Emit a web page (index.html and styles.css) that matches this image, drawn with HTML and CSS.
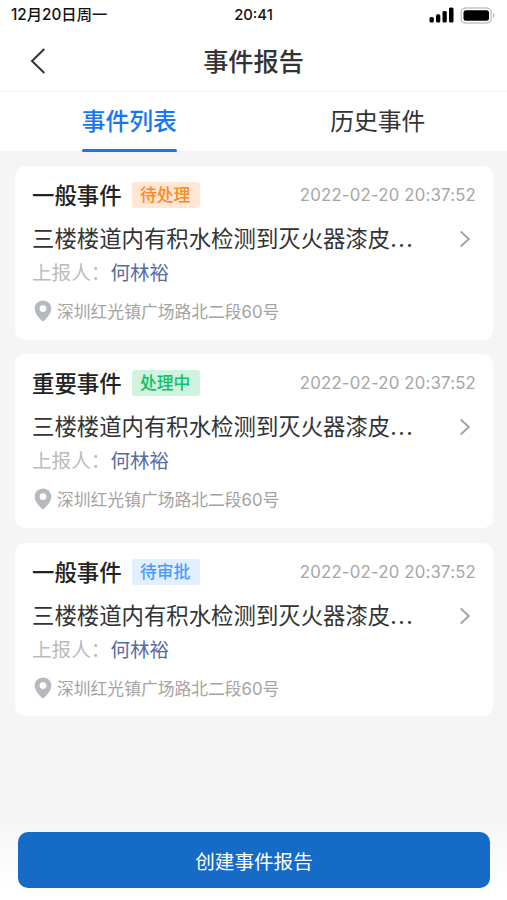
FILE: index.html
```html
<!DOCTYPE html>
<html lang="zh-CN">
<head>
<meta charset="UTF-8">
<meta name="viewport" content="width=device-width, initial-scale=1">
<title>事件报告</title>
<link rel="stylesheet" href="styles.css">
</head>
<body>
<svg class="symbols" aria-hidden="true">
  <symbol id="pin" viewBox="0 0 18 22"><path fill-rule="evenodd" d="M9 .5C4.300.500.700 4.100.700 8.600c0 4.500 3.500 8.600 6.900 12 .8.800 2 .8 2.800 0 3.400-3.400 6.900-7.500 6.900-12C17.300 4.100 13.700.5 9 .5ZM9 5.200a3.400 3.400 0 1 1 0 6.800 3.400 3.400 0 0 1 0-6.800Z" fill="#b6b9be"/></symbol>
  <symbol id="chevron" viewBox="0 0 12 18"><path d="M1.700 1.500 9.800 9l-8.100 7.500" fill="none" stroke="#a3a3a3" stroke-width="1.900"/></symbol>
</svg>
<div class="page">
  <header class="status">
    <span>12月20日周一</span>
    <span class="clock">20:41</span>
    <span class="indicators">
      <svg width="26" height="16" viewBox="0 0 26 16"><rect x="0.500" y="10" width="4.300" height="5.500" rx="1.500"/><rect x="7" y="7.200" width="4.300" height="8.300" rx="1.500"/><rect x="13.500" y="4" width="4.300" height="11.500" rx="1.500"/><rect x="20" y="0.500" width="4.500" height="15" rx="1.500"/></svg>
      <svg width="36" height="17" viewBox="0 0 36 17"><rect x="1.200" y="1" width="30" height="15" rx="4.500" fill="#fff" stroke="#c5c5c5" stroke-width="1.500"/><rect x="3.500" y="3.200" width="25.500" height="10.600" rx="2.500"/><path d="M33 6c2 1 2 4 0 5Z" fill="#bbb"/></svg>
    </span>
  </header>
  <nav class="navbar">
    <svg class="back" width="16" height="28" viewBox="0 0 16 28"><path d="M14.300 2 2 14l12.300 12" fill="none" stroke="#333" stroke-width="2"/></svg>
    <h1>事件报告</h1>
  </nav>
  <div class="tabs">
    <div class="tab active"><span>事件列表</span></div>
    <div class="tab"><span>历史事件</span></div>
  </div>
  <main class="list">
    <article class="card">
      <div class="head"><h2>一般事件</h2><span class="badge pending">待处理</span><time>2022-02-20 20:37:52</time></div>
      <div class="desc"><p>三楼楼道内有积水检测到灭火器漆皮<span class="dots">...</span></p><svg class="chevron"><use href="#chevron"/></svg></div>
      <div class="reporter"><span>上报人：</span><b>何林裕</b></div>
      <div class="address"><svg class="pin"><use href="#pin"/></svg><span>深圳红光镇广场路北二段60号</span></div>
    </article>
    <article class="card">
      <div class="head"><h2>重要事件</h2><span class="badge processing">处理中</span><time>2022-02-20 20:37:52</time></div>
      <div class="desc"><p>三楼楼道内有积水检测到灭火器漆皮<span class="dots">...</span></p><svg class="chevron"><use href="#chevron"/></svg></div>
      <div class="reporter"><span>上报人：</span><b>何林裕</b></div>
      <div class="address"><svg class="pin"><use href="#pin"/></svg><span>深圳红光镇广场路北二段60号</span></div>
    </article>
    <article class="card">
      <div class="head"><h2>一般事件</h2><span class="badge review">待审批</span><time>2022-02-20 20:37:52</time></div>
      <div class="desc"><p>三楼楼道内有积水检测到灭火器漆皮<span class="dots">...</span></p><svg class="chevron"><use href="#chevron"/></svg></div>
      <div class="reporter"><span>上报人：</span><b>何林裕</b></div>
      <div class="address"><svg class="pin"><use href="#pin"/></svg><span>深圳红光镇广场路北二段60号</span></div>
    </article>
  </main>
  <footer class="footer"><button>创建事件报告</button></footer>
</div>
</body>
</html>
```

FILE: styles.css
```css
* { box-sizing: border-box; margin: 0; padding: 0; }
body { font-family: Inter, "Noto Sans CJK SC", sans-serif; color: #333; background: #f5f5f5; }
svg { display: block; flex: none; }
.symbols { width: 0; height: 0; position: absolute; }
.page { height: 900px; display: flex; flex-direction: column; overflow: hidden; }
.status { height: 30px; background: #fff; display: grid; grid-template-columns: 1fr auto 1fr; align-items: center; padding: 0 11px; font-size: 15.3px; line-height: 30px; font-weight: 500; color: #111; white-space: nowrap; }
.clock { font-size: 14.8px; }
.indicators { display: flex; justify-content: flex-end; align-items: center; gap: 5px; }
.navbar { height: 62px; background: #fff; border-bottom: 1.5px solid #f4f4f4; display: grid; grid-template-columns: 60px 1fr 60px; align-items: center; }
.back { margin-left: 30px; }
h1 { font-size: 25.2px; line-height: 60px; padding-top: 2px; font-weight: 500; text-align: center; }
.tabs { height: 59px; flex: none; background: #fff; display: flex; padding: 0 5px; }
.tab { flex: 1; display: flex; justify-content: center; font-size: 23.8px; }
.tab span { height: 59px; line-height: 60px; }
.active { color: #1677f2; }
.active span { position: relative; font-weight: 500; }
.active span::after { content: ""; position: absolute; left: 0; right: 0; bottom: -0.500px; height: 3px; border-radius: 2px; background: #1677f2; }
.list { flex: 1; padding: 15px 14px 0 15px; display: flex; flex-direction: column; gap: 14.5px; }
.card { height: 173.8px; background: #fff; border-radius: 10px; padding: 14px 17px 0; }
.head { display: flex; align-items: center; height: 30px; }
h2 { font-size: 22.4px; line-height: 30px; padding-top: 2px; font-weight: 500; color: #222; }
.badge { margin-left: 10px; width: 68px; height: 26px; line-height: 27px; padding-right: 1px; border-radius: 3px; text-align: center; font-size: 16.8px; font-weight: 500; }
.pending { color: #ff871f; background: #ffe7d3; }
.processing { color: #0fc160; background: #cff3df; }
.review { color: #4b9bff; background: #e1efff; }
time { margin-left: auto; font-size: 16.8px; letter-spacing: 0.18px; color: #a6a6a6; white-space: nowrap; }
.desc { display: flex; justify-content: space-between; align-items: center; height: 58px; margin-right: 5px; font-size: 22.4px; line-height: 58px; white-space: nowrap; }
.dots { letter-spacing: 1.6px; }
.chevron { width: 12px; height: 18px; }
.reporter { margin-top: -10px; height: 30px; line-height: 30px; font-size: 19.6px; color: #bbb; display: flex; }
.reporter b { font-weight: 400; color: #576b9f; }
.address { display: flex; align-items: center; height: 30px; margin-top: 8px; font-size: 16.8px; line-height: 30px; color: #a3a3a3; }
.address span { padding-top: 2px; }
.pin { width: 18px; height: 22px; margin: 0 5px 0 2px; }
.footer { height: 84px; flex: none; padding: 16px 17px 0 18px; background: linear-gradient(#f5f5f5, #fff 85%); }
button { display: block; width: 100%; height: 56px; border: 0; border-radius: 10px; background: #166bc7; color: #fff; font: inherit; font-size: 19.6px; line-height: 56px; padding-top: 2px; }
```
